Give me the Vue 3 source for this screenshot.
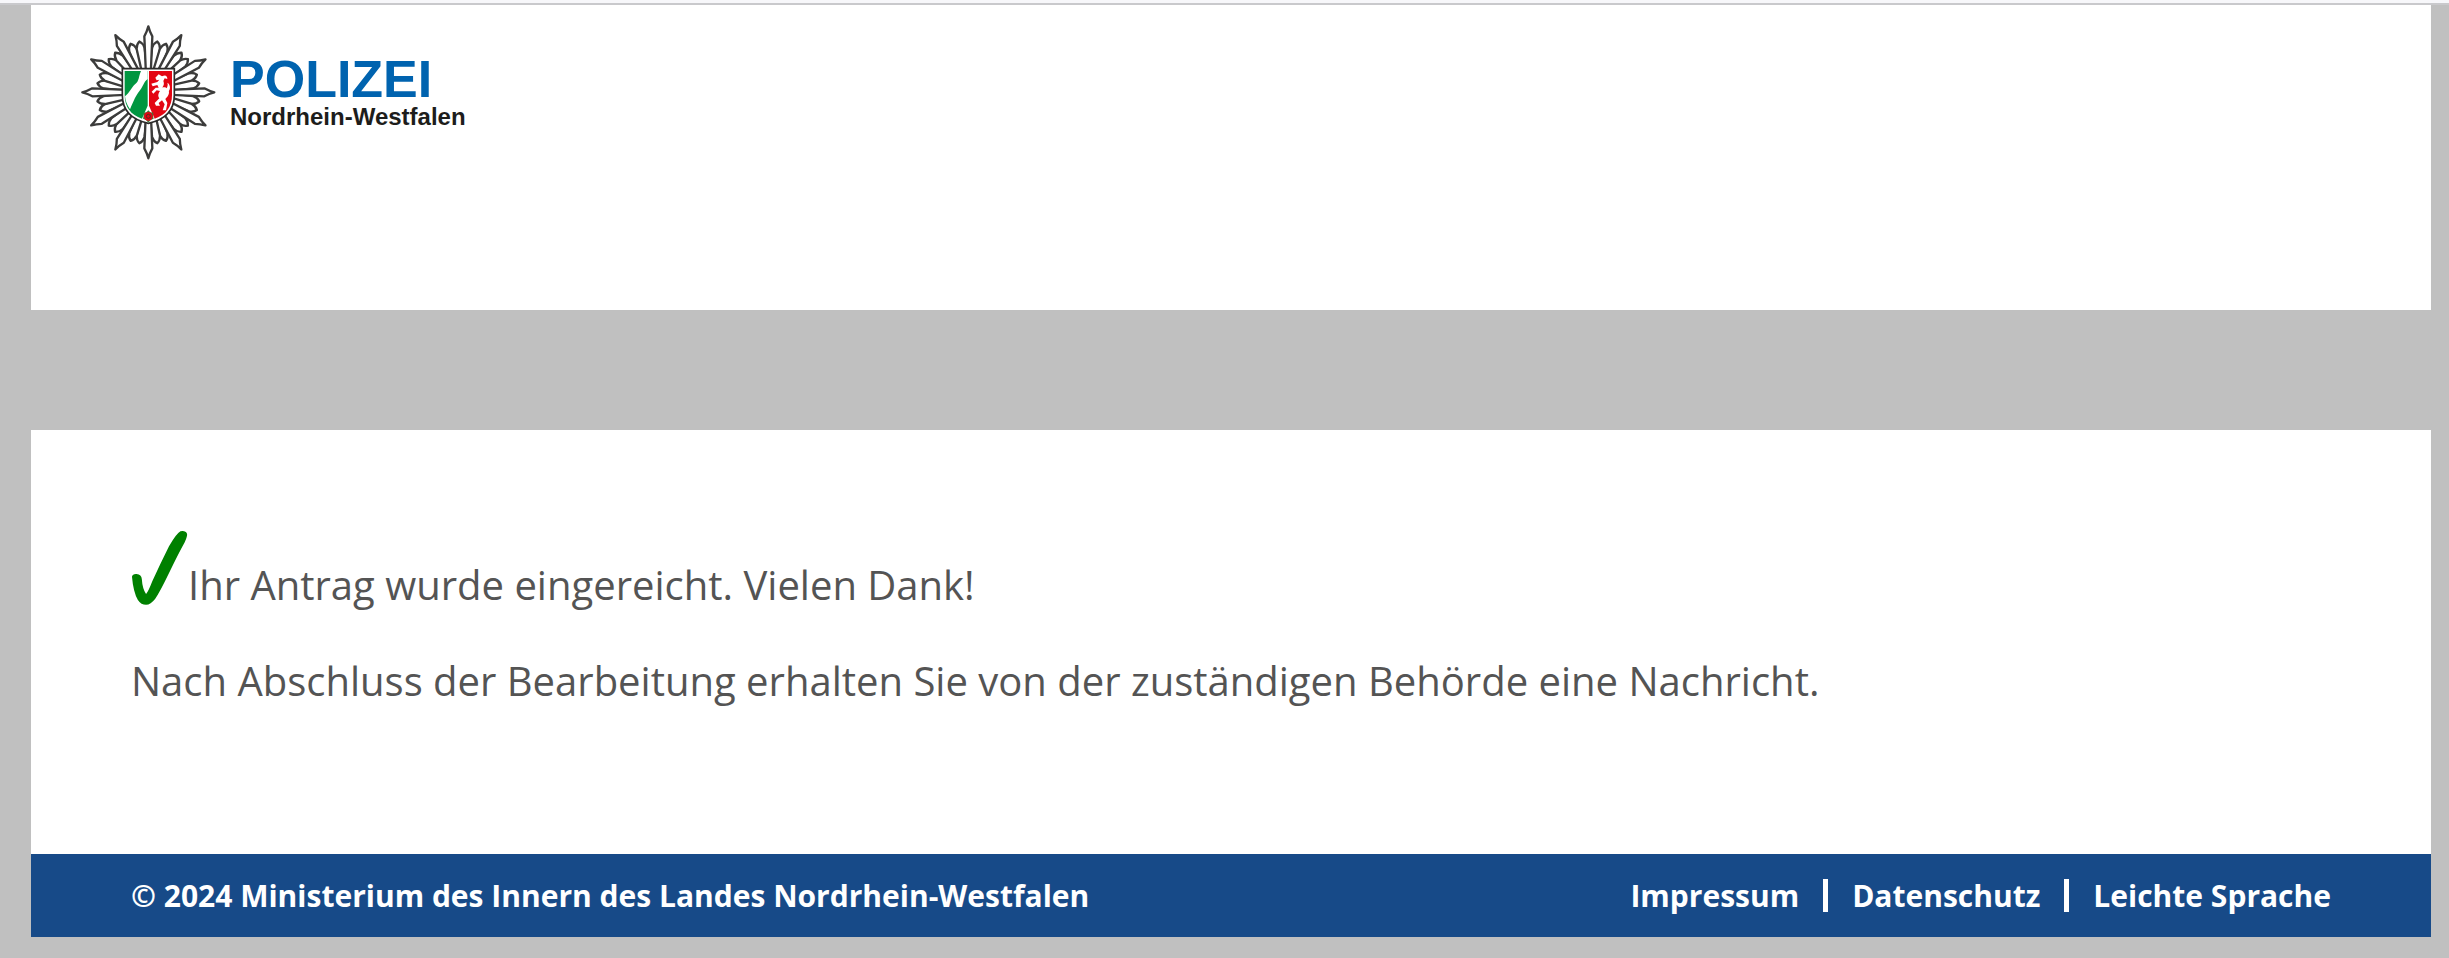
<template>
  <div class="page">
    <div class="top-line"></div>

    <header class="header">
      <a href="#" class="logo" aria-label="Polizei Nordrhein-Westfalen">
        <svg class="star" viewBox="30 27 411 411" aria-hidden="true">
          <g fill="#fff" stroke="#3c3c3b" stroke-width="7" stroke-linejoin="round">
            <path
              v-for="angle in smallRays"
              :key="'s' + angle"
              :transform="`rotate(${angle} 235 232)`"
              d="M228 200 L223 98 Q225 84 235 77 Q245 84 247 98 L242 200 Z"
            />
            <path
              v-for="angle in bigRays"
              :key="'b' + angle"
              :transform="`rotate(${angle} 235 232)`"
              d="M228 180 L223 64 Q231 50 235 34 Q239 50 247 64 L242 180 Z"
            />
          </g>
          <path d="M157 161 H313 V240 C313 284 286 314 235 325 C184 314 157 284 157 240 Z" fill="#fff" stroke="#2b2a29" stroke-width="5" />
          <path d="M164 168 H233 V272 L216 311 C182 300 164 275 164 240 Z" fill="#009640" />
          <path d="M237 168 H306 V240 C306 275 288 300 254 311 L237 272 Z" fill="#e30613" />
          <path d="M213 168 H233 V192 C220 202 220 214 210 226 C197 242 192 256 180 283 C171 271 166 256 165 244 C180 232 184 218 195 208 C208 199 206 183 213 168 Z" fill="#fff" />
          <path
            d="M256 188 L266 178 L276 184 C286 178 292 182 292 192 L284 190 L280 198 C284 208 280 214 276 218 C284 214 298 220 297 234 C296 242 290 248 286 252 L292 264 L288 286 L278 286 L284 268 L276 256 L266 264 L270 272 L258 272 L254 264 L268 250 C262 242 266 234 270 228 L260 226 L250 236 L245 230 L257 218 L266 218 L262 210 L248 214 L244 206 L262 201 L268 194 L260 196 Z"
            fill="#fff"
          />
          <path d="M290 232 C304 228 302 208 292 203 C296 214 288 216 290 232 Z" fill="#fff" />
          <path d="M235 286 L241 292 L250 293 L249 302 L251 311 L242 315 L235 323 L228 315 L219 311 L221 302 L220 293 L229 292 Z" fill="#3f7a3a" />
          <circle cx="235" cy="304" r="13" fill="#e30613" />
          <circle cx="235" cy="304" r="6" fill="none" stroke="#5b2a20" stroke-width="3" />
        </svg>
        <span class="wordmark">
          <span class="name">POLIZEI</span>
          <span class="region">Nordrhein-Westfalen</span>
        </span>
      </a>
    </header>

    <main class="content">
      <p class="message">
        <svg class="check" viewBox="63 57 174 231" aria-hidden="true">
          <path
            d="M66 199 Q68 190 80 191 Q95 193 96 206 Q98 236 109 252 Q116 244 128 213 Q153 158 179 106 Q202 66 214 60 Q230 57 234 68 Q236 74 227 94 Q207 130 178 190 Q150 248 137 266 Q123 284 109 285 Q94 285 84 270 Q70 246 66 199 Z"
            fill="#008000"
          />
        </svg><span>Ihr Antrag wurde eingereicht. Vielen Dank!</span>
      </p>
      <p class="message">Nach Abschluss der Bearbeitung erhalten Sie von der zuständigen Behörde eine Nachricht.</p>
    </main>

    <footer class="footer">
      <span>© 2024 Ministerium des Innern des Landes Nordrhein-Westfalen</span>
      <nav class="links">
        <a v-for="link in links" :key="link" href="#">{{ link }}</a>
      </nav>
    </footer>
  </div>
</template>

<script setup>
const links = ['Impressum', 'Datenschutz', 'Leichte Sprache'];

// twelve long rays with two short ones between each pair
const bigRays = Array.from({ length: 12 }, (_, i) => i * 30);
const smallRays = bigRays.flatMap((angle) => [angle + 10, angle + 20]);
</script>

<style>
body {
  margin: 0;
  background: #c0c0c0;
}
</style>

<style scoped>
.page {
  font-family: 'Open Sans', 'Noto Sans', sans-serif;
  color: #545454;
}

.top-line {
  height: 3px;
  background: #f7f7fa;
  border-bottom: 2px solid #c9c9cc;
}

.header {
  box-sizing: border-box;
  min-height: 305px;
  margin: 0 18px 120px 31px;
  padding: 19px 49px;
  background: #fff;
}

.logo {
  display: inline-flex;
  gap: 13px;
  color: #1d1d1b;
  font-family: 'Liberation Sans', Arial, sans-serif;
  font-weight: 700;
  text-decoration: none;
}

.star {
  width: 137px;
  height: 137px;
}

.wordmark {
  display: flex;
  flex-direction: column;
  padding-top: 30px;
}

.name {
  font-size: 52px;
  line-height: 50px;
  color: #0063af;
}

.region {
  font-size: 24px;
  line-height: 26px;
}

.content {
  box-sizing: border-box;
  min-height: 424px;
  margin: 0 18px 0 31px;
  padding: 100px;
  background: #fff;
}

.message {
  margin: 0 0 36px;
  font-size: 40px;
  line-height: 60px;
}

.check {
  width: 57px;
  height: 76px;
  vertical-align: -6px;
}

.footer {
  display: flex;
  justify-content: space-between;
  align-items: center;
  min-height: 83px;
  margin: 0 18px 21px 31px;
  padding: 0 100px;
  background: #174a88;
  color: #fff;
  font-size: 30px;
  line-height: 33px;
  font-weight: 700;
}

.links {
  display: flex;
}

.links a {
  color: #fff;
  text-decoration: none;
}

.links a + a {
  margin-left: 24px;
  padding-left: 24px;
  border-left: 5px solid #fff;
}
</style>
